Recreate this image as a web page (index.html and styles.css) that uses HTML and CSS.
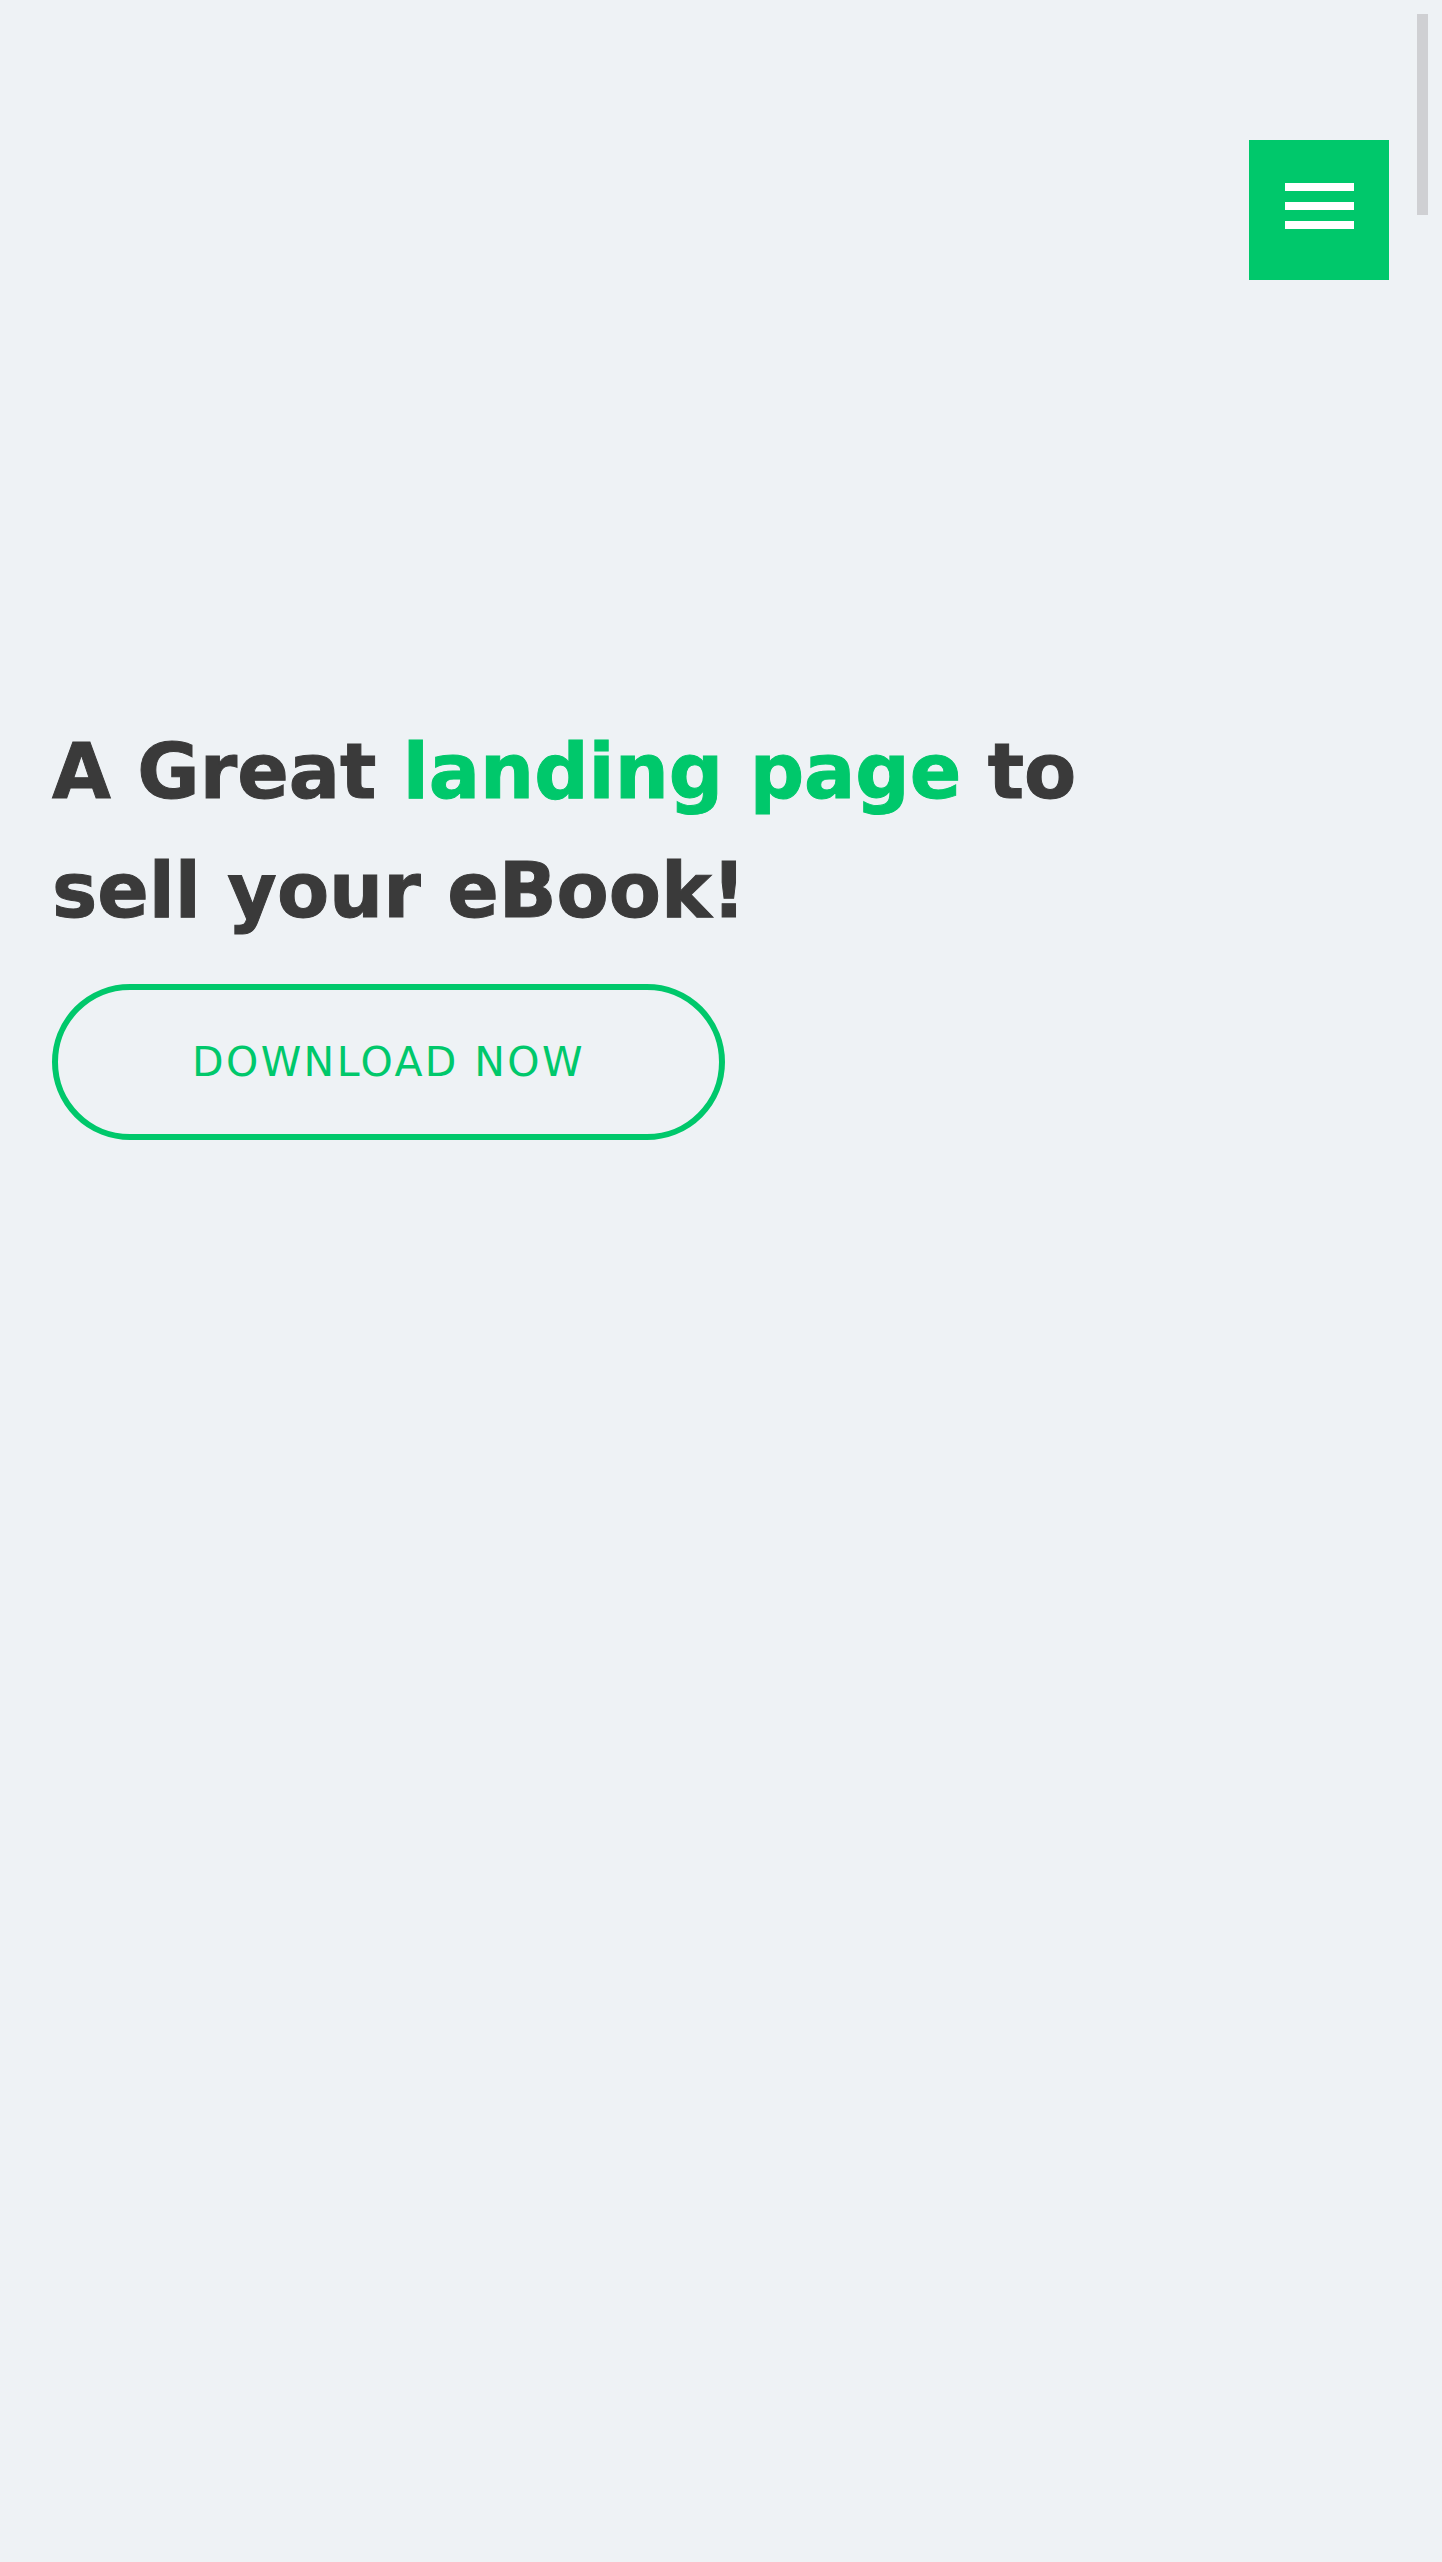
FILE: index.html
```html
<!DOCTYPE html>
<html lang="en">
<head>
<meta charset="utf-8">
<title>eBook Landing</title>
<link rel="stylesheet" href="styles.css">
</head>
<body>
<div class="scroll-thumb"></div>
<header class="topbar">
  <button class="menu-btn" aria-label="Menu">
    <span class="bar"></span>
    <span class="bar"></span>
    <span class="bar"></span>
  </button>
</header>
<main class="hero">
  <h1 class="hero-title">A Great <span class="accent">landing page</span> to sell your eBook!</h1>
  <a class="btn-outline" href="#">DOWNLOAD NOW</a>
</main>
</body>
</html>
```
FILE: styles.css
```css
html, body {
  margin: 0;
  padding: 0;
}
body {
  background: #eef2f5;
  min-height: 2562px;
  font-family: "DejaVu Sans", "Liberation Sans", sans-serif;
  color: #3a3a3a;
  overflow: hidden;
}
.scroll-thumb {
  position: fixed;
  top: 14px;
  right: 14px;
  width: 11px;
  height: 201px;
  background: #cfd0d3;
}
.topbar {
  display: flex;
  justify-content: flex-end;
  padding: 140px 53px 0 0;
}
.menu-btn {
  width: 140px;
  height: 140px;
  background: #00c86b;
  border: 0;
  padding: 43px 35px 0 36px;
  margin: 0;
  display: flex;
  flex-direction: column;
  gap: 11px;
  cursor: pointer;
}
.bar {
  display: block;
  width: 69px;
  height: 8px;
  background: #ffffff;
}
.hero {
  padding: 432px 52px 0 52px;
}
.hero-title {
  margin: 0;
  max-width: 1090px;
  font-size: 76px;
  line-height: 119px;
  font-weight: 700;
  color: #3a3a3a;
  -webkit-text-stroke: 1px currentColor;
}
.accent {
  color: #00c86b;
}
.btn-outline {
  margin-top: 34px;
  box-sizing: border-box;
  width: 673px;
  height: 156px;
  border: 6px solid #00c86b;
  border-radius: 78px;
  display: flex;
  align-items: center;
  justify-content: center;
  color: #00c86b;
  text-decoration: none;
  font-size: 41px;
  font-weight: 400;
  letter-spacing: 2.4px;
}
```
